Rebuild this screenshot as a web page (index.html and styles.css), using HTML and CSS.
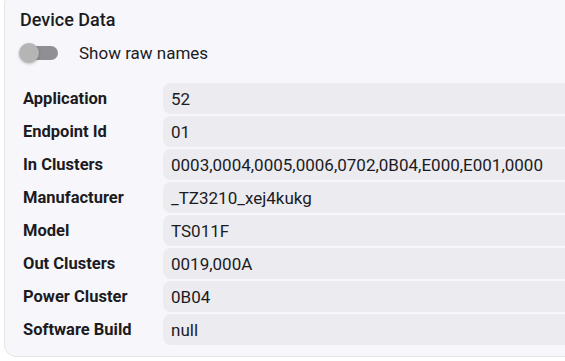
FILE: index.html
```html
<!DOCTYPE html>
<html lang="en">
<head>
<meta charset="UTF-8">
<meta name="viewport" content="width=device-width, initial-scale=1.0">
<title>Device Data</title>
<link rel="stylesheet" href="styles.css">
</head>
<body>
<div class="card">
  <h2 class="card-title">Device Data</h2>
  <label class="toggle-row">
    <span class="toggle"><span class="toggle-thumb"></span></span>
    <span class="toggle-label">Show raw names</span>
  </label>
  <div class="data-list">
    <div class="data-row"><div class="data-key">Application</div><div class="data-value">52</div></div>
    <div class="data-row"><div class="data-key">Endpoint Id</div><div class="data-value">01</div></div>
    <div class="data-row"><div class="data-key">In Clusters</div><div class="data-value">0003,0004,0005,0006,0702,0B04,E000,E001,0000</div></div>
    <div class="data-row"><div class="data-key">Manufacturer</div><div class="data-value">_TZ3210_xej4kukg</div></div>
    <div class="data-row"><div class="data-key">Model</div><div class="data-value">TS011F</div></div>
    <div class="data-row"><div class="data-key">Out Clusters</div><div class="data-value">0019,000A</div></div>
    <div class="data-row"><div class="data-key">Power Cluster</div><div class="data-value">0B04</div></div>
    <div class="data-row"><div class="data-key">Software Build</div><div class="data-value">null</div></div>
  </div>
</div>
</body>
</html>
```

FILE: styles.css
```css
body {
  margin: 0;
  background-color: #ffffff;
  font-family: Roboto, 'Liberation Sans', sans-serif;
  color: #1c1b1f;
  overflow: hidden;
}
.card {
  margin: -8px 0 0 4px;
  width: 620px;
  background-color: #f7f7fb;
  border: 1px solid #e4e4ea;
  border-radius: 12px;
  padding: 17px 0 11px 15px;
}
.card-title {
  margin: 0;
  font-size: 18px;
  line-height: 20px;
  font-weight: 500;
}
.toggle-row {
  display: flex;
  align-items: center;
  height: 24px;
  margin-top: 11px;
}
.toggle {
  position: relative;
  width: 37px;
  height: 14px;
  margin-left: 1px;
  border-radius: 7px;
  background-color: #8f8f94;
}
.toggle-thumb {
  position: absolute;
  left: -2px;
  top: -3px;
  width: 20px;
  height: 20px;
  border-radius: 50%;
  background-color: #b5b5b5;
  box-shadow: 0 1px 3px rgba(0, 0, 0, 0.25);
}
.toggle-label {
  margin-left: 21px;
  font-size: 17px;
}
.data-list {
  display: flex;
  flex-direction: column;
  gap: 2px;
  margin-top: 18px;
}
.data-row {
  display: grid;
  grid-template-columns: 143px 1fr;
  height: 31px;
  align-items: center;
}
.data-key {
  padding-left: 3px;
  font-size: 16.5px;
  font-weight: 700;
}
.data-value {
  height: 100%;
  display: flex;
  align-items: center;
  padding-left: 8px;
  border-radius: 8px 0 0 8px;
  background-color: #ebebf0;
  font-size: 17px;
}
```
